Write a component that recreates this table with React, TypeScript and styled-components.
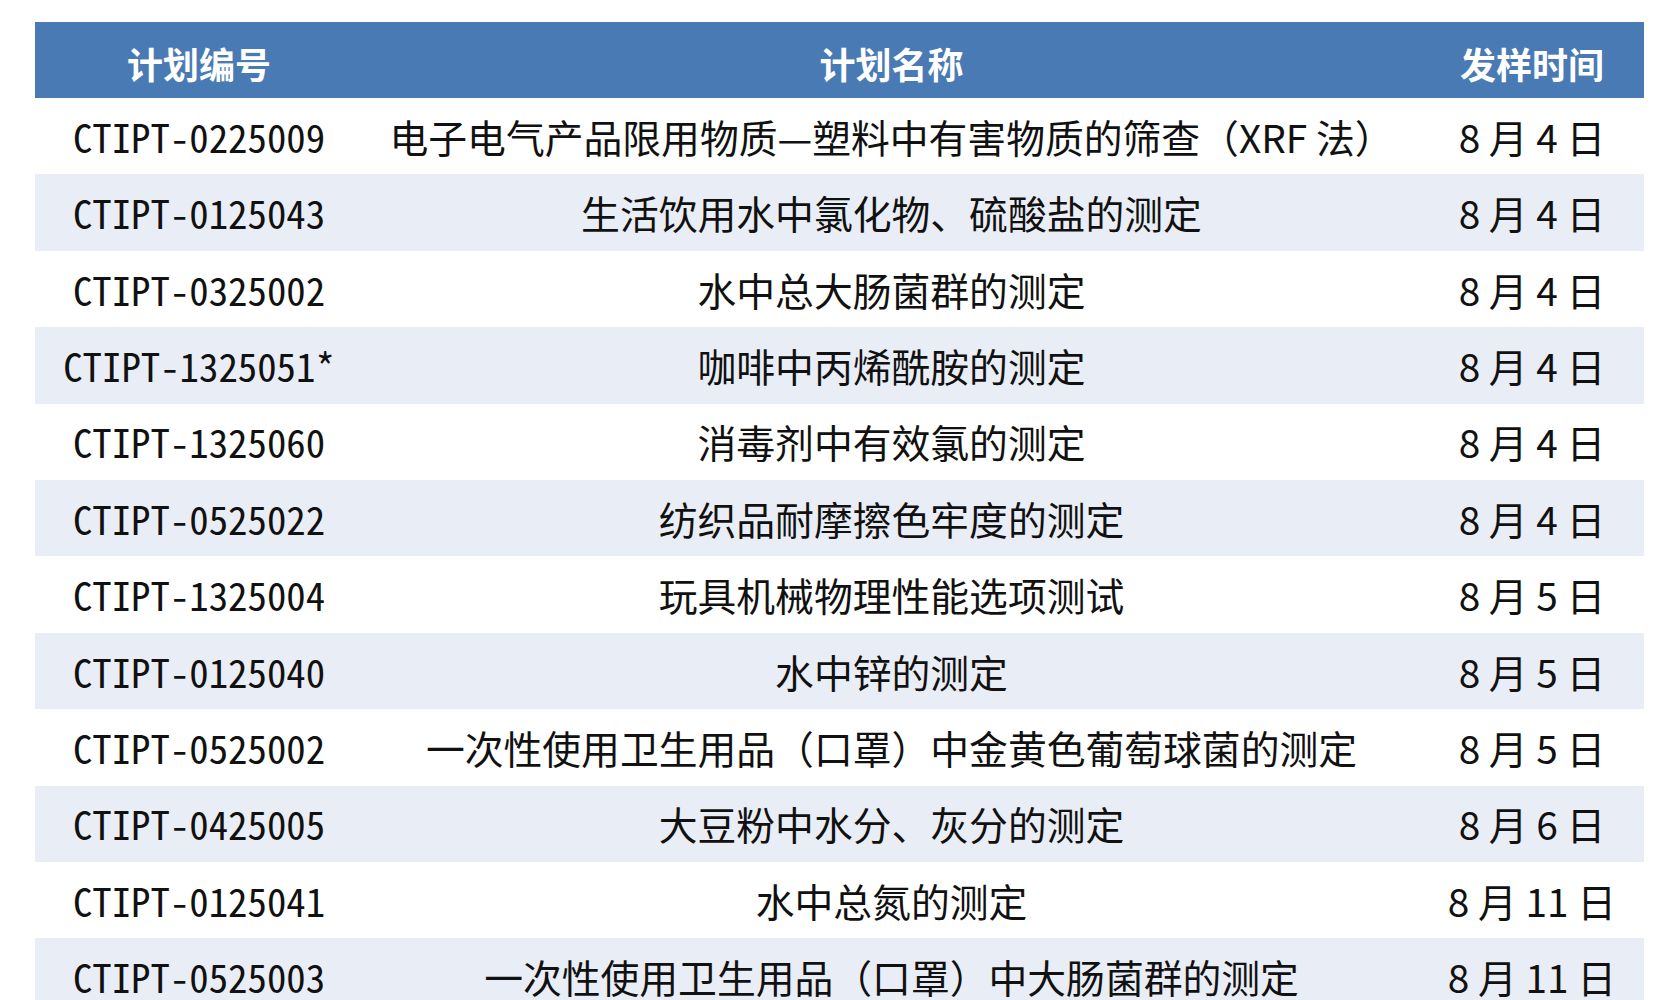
import React from 'react';
import styled, { createGlobalStyle } from 'styled-components';

const GlobalStyle = createGlobalStyle`
  html, body {
    margin: 0;
    padding: 0;
    background: #ffffff;
  }
  body {
    font-family: "Noto Sans CJK SC", "Noto Sans", sans-serif;
    color: #000000;
  }
`;

const Page = styled.div`
  padding: 22px 0 0 35px;
  height: 1000px;
  box-sizing: border-box;
  overflow: hidden;
`;

const StyledTable = styled.table`
  width: 1609px;
  border-collapse: collapse;
  table-layout: fixed;

  col.code {
    width: 328px;
  }
  col.name {
    width: 1057px;
  }
  col.date {
    width: 224px;
  }
`;

const HeadCell = styled.th`
  height: 76px;
  padding: 6px 0 0;
  background: #4a7ab4;
  color: #ffffff;
  font-size: 36px;
  font-weight: 700;
  text-align: center;
  line-height: 1;
  box-sizing: border-box;
`;

const Row = styled.tr<{ $striped: boolean }>`
  height: 76.4px;
  background: ${({ $striped }) => ($striped ? '#e9edf5' : '#ffffff')};
`;

const Cell = styled.td<{ $code?: boolean }>`
  padding: 0;
  text-align: center;
  white-space: nowrap;
  font-size: ${({ $code }) => ($code ? '38.8px' : '38.8px')};
  font-feature-settings: ${({ $code }) => ($code ? '"hwid"' : 'normal')};
  line-height: 1;
  color: #111111;
`;

interface PlanType {
  code: string;
  name: string;
  date: string;
}

const plans: PlanType[] = [
  { code: 'CTIPT-0225009', name: '电子电气产品限用物质—塑料中有害物质的筛查（XRF 法）', date: '8 月 4 日' },
  { code: 'CTIPT-0125043', name: '生活饮用水中氯化物、硫酸盐的测定', date: '8 月 4 日' },
  { code: 'CTIPT-0325002', name: '水中总大肠菌群的测定', date: '8 月 4 日' },
  { code: 'CTIPT-1325051*', name: '咖啡中丙烯酰胺的测定', date: '8 月 4 日' },
  { code: 'CTIPT-1325060', name: '消毒剂中有效氯的测定', date: '8 月 4 日' },
  { code: 'CTIPT-0525022', name: '纺织品耐摩擦色牢度的测定', date: '8 月 4 日' },
  { code: 'CTIPT-1325004', name: '玩具机械物理性能选项测试', date: '8 月 5 日' },
  { code: 'CTIPT-0125040', name: '水中锌的测定', date: '8 月 5 日' },
  { code: 'CTIPT-0525002', name: '一次性使用卫生用品（口罩）中金黄色葡萄球菌的测定', date: '8 月 5 日' },
  { code: 'CTIPT-0425005', name: '大豆粉中水分、灰分的测定', date: '8 月 6 日' },
  { code: 'CTIPT-0125041', name: '水中总氮的测定', date: '8 月 11 日' },
  { code: 'CTIPT-0525003', name: '一次性使用卫生用品（口罩）中大肠菌群的测定', date: '8 月 11 日' },
];

const App = () => {
  return (
    <>
      <GlobalStyle />
      <Page>
        <StyledTable>
          <colgroup>
            <col className="code" />
            <col className="name" />
            <col className="date" />
          </colgroup>
          <thead>
            <tr>
              <HeadCell>计划编号</HeadCell>
              <HeadCell>计划名称</HeadCell>
              <HeadCell>发样时间</HeadCell>
            </tr>
          </thead>
          <tbody>
            {plans.map((plan, i) => (
              <Row key={plan.code} $striped={i % 2 === 1}>
                <Cell $code>{plan.code}</Cell>
                <Cell>{plan.name}</Cell>
                <Cell>{plan.date}</Cell>
              </Row>
            ))}
          </tbody>
        </StyledTable>
      </Page>
    </>
  );
};

export default App;
